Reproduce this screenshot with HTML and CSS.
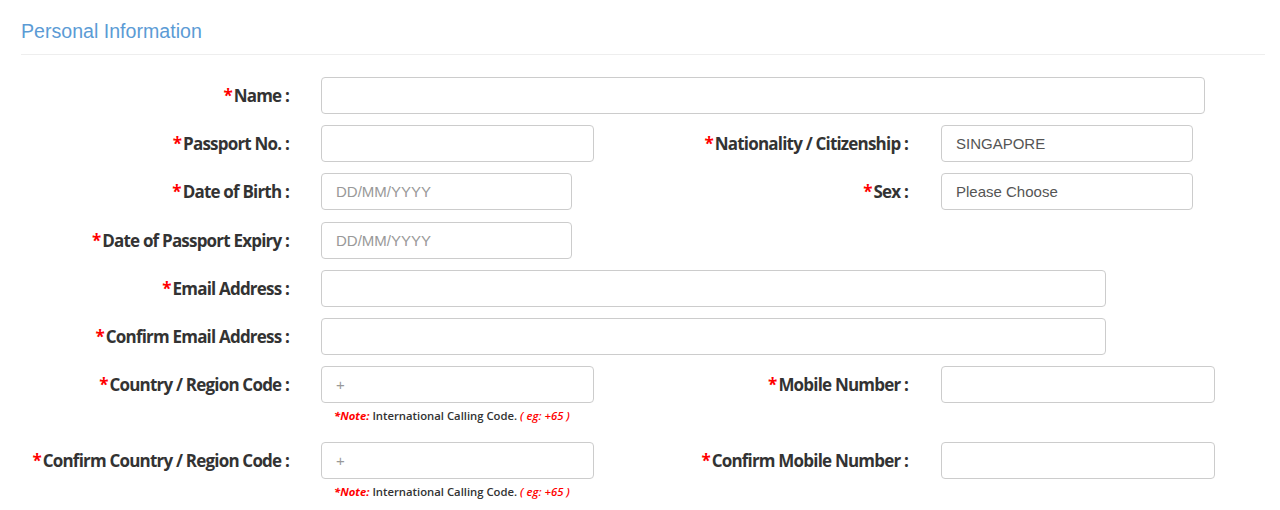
FILE: index.html
```html
<!DOCTYPE html>
<html lang="en">
<head>
<meta charset="utf-8">
<title>Personal Information</title>
<link rel="stylesheet" href="styles.css">
</head>
<body>
<section class="panel">
  <h2 class="panel-title">Personal Information</h2>

  <form class="form">
    <div class="row">
      <div class="pair">
        <label class="label"><span class="req">*</span>Name :</label>
        <input class="input w-884" type="text">
      </div>
    </div>

    <div class="row">
      <div class="pair half">
        <label class="label"><span class="req">*</span>Passport No. :</label>
        <input class="input w-273" type="text">
      </div>
      <div class="pair">
        <label class="label label-right"><span class="req">*</span>Nationality / Citizenship :</label>
        <input class="input w-252" type="text" value="SINGAPORE">
      </div>
    </div>

    <div class="row">
      <div class="pair half">
        <label class="label"><span class="req">*</span>Date of Birth :</label>
        <input class="input w-251" type="text" placeholder="DD/MM/YYYY">
      </div>
      <div class="pair">
        <label class="label label-right"><span class="req">*</span>Sex :</label>
        <div class="input select w-252">Please Choose</div>
      </div>
    </div>

    <div class="row">
      <div class="pair half">
        <label class="label"><span class="req">*</span>Date of Passport Expiry :</label>
        <input class="input w-251" type="text" placeholder="DD/MM/YYYY">
      </div>
    </div>

    <div class="row">
      <div class="pair">
        <label class="label"><span class="req">*</span>Email Address :</label>
        <input class="input w-785" type="text">
      </div>
    </div>

    <div class="row">
      <div class="pair">
        <label class="label"><span class="req">*</span>Confirm Email Address :</label>
        <input class="input w-785" type="text">
      </div>
    </div>

    <div class="row">
      <div class="pair half">
        <label class="label"><span class="req">*</span>Country / Region Code :</label>
        <div class="field">
          <input class="input w-273" type="text" placeholder="+">
          <p class="note"><em class="note-key">*Note:</em> International Calling Code. <em class="note-eg">( eg: +65 )</em></p>
        </div>
      </div>
      <div class="pair">
        <label class="label label-right"><span class="req">*</span>Mobile Number :</label>
        <input class="input w-274" type="text">
      </div>
    </div>

    <div class="row">
      <div class="pair half">
        <label class="label"><span class="req">*</span>Confirm Country / Region Code :</label>
        <div class="field">
          <input class="input w-273" type="text" placeholder="+">
          <p class="note"><em class="note-key">*Note:</em> International Calling Code. <em class="note-eg">( eg: +65 )</em></p>
        </div>
      </div>
      <div class="pair">
        <label class="label label-right"><span class="req">*</span>Confirm Mobile Number :</label>
        <input class="input w-274" type="text">
      </div>
    </div>
  </form>
</section>
</body>
</html>
```

FILE: styles.css
```css
* {
  box-sizing: border-box;
}

html, body {
  margin: 0;
  padding: 0;
  background: #ffffff;
}

body {
  font-family: "Open Sans", "Liberation Sans", Arial, sans-serif;
  color: #333333;
}

.panel {
  padding-top: 20px;
}

.panel-title {
  margin: 0 15px 0 21px;
  padding-bottom: 12px;
  border-bottom: 1px solid #eeeeee;
  font-family: "Liberation Sans", Arial, sans-serif;
  font-weight: normal;
  font-size: 19.6px;
  line-height: 22px;
  color: #5b9bd5;
}

.form {
  padding-top: 22px;
}

.row {
  display: flex;
  align-items: flex-start;
  margin-bottom: 11.2px;
}

.pair {
  display: flex;
  align-items: flex-start;
}

.pair.half {
  width: 620px;
}

.label {
  flex: none;
  width: 289px;
  margin-right: 32px;
  text-align: right;
  font-weight: 700;
  font-size: 17px;
  letter-spacing: -0.8px;
  line-height: 37px;
  color: #333333;
  white-space: nowrap;
}

.label-right {
  width: 288px;
  margin-right: 33px;
}

.req {
  color: #ff0000;
  margin-right: 1px;
  letter-spacing: 0;
}

.input {
  display: block;
  height: 37px;
  padding: 0 14px;
  border: 1px solid #cccccc;
  border-radius: 4px;
  background: #ffffff;
  font-family: "Liberation Sans", Arial, sans-serif;
  font-size: 15px;
  line-height: 35px;
  color: #555555;
  outline: none;
}

.input::placeholder {
  color: #999999;
  opacity: 1;
}

.select {
  color: #555555;
}

.w-884 { width: 884px; }
.w-785 { width: 785px; }
.w-274 { width: 274px; }
.w-273 { width: 273px; }
.w-252 { width: 252px; }
.w-251 { width: 251px; }

.field {
  display: flex;
  flex-direction: column;
}

.note {
  margin: 4px 0 0 13px;
  font-size: 11.3px;
  font-weight: 600;
  line-height: 18px;
  color: #333333;
  padding-bottom: 6px;
}

.note em {
  color: #ff0000;
  font-style: italic;
}

.note-key {
  font-weight: 700;
}
```
